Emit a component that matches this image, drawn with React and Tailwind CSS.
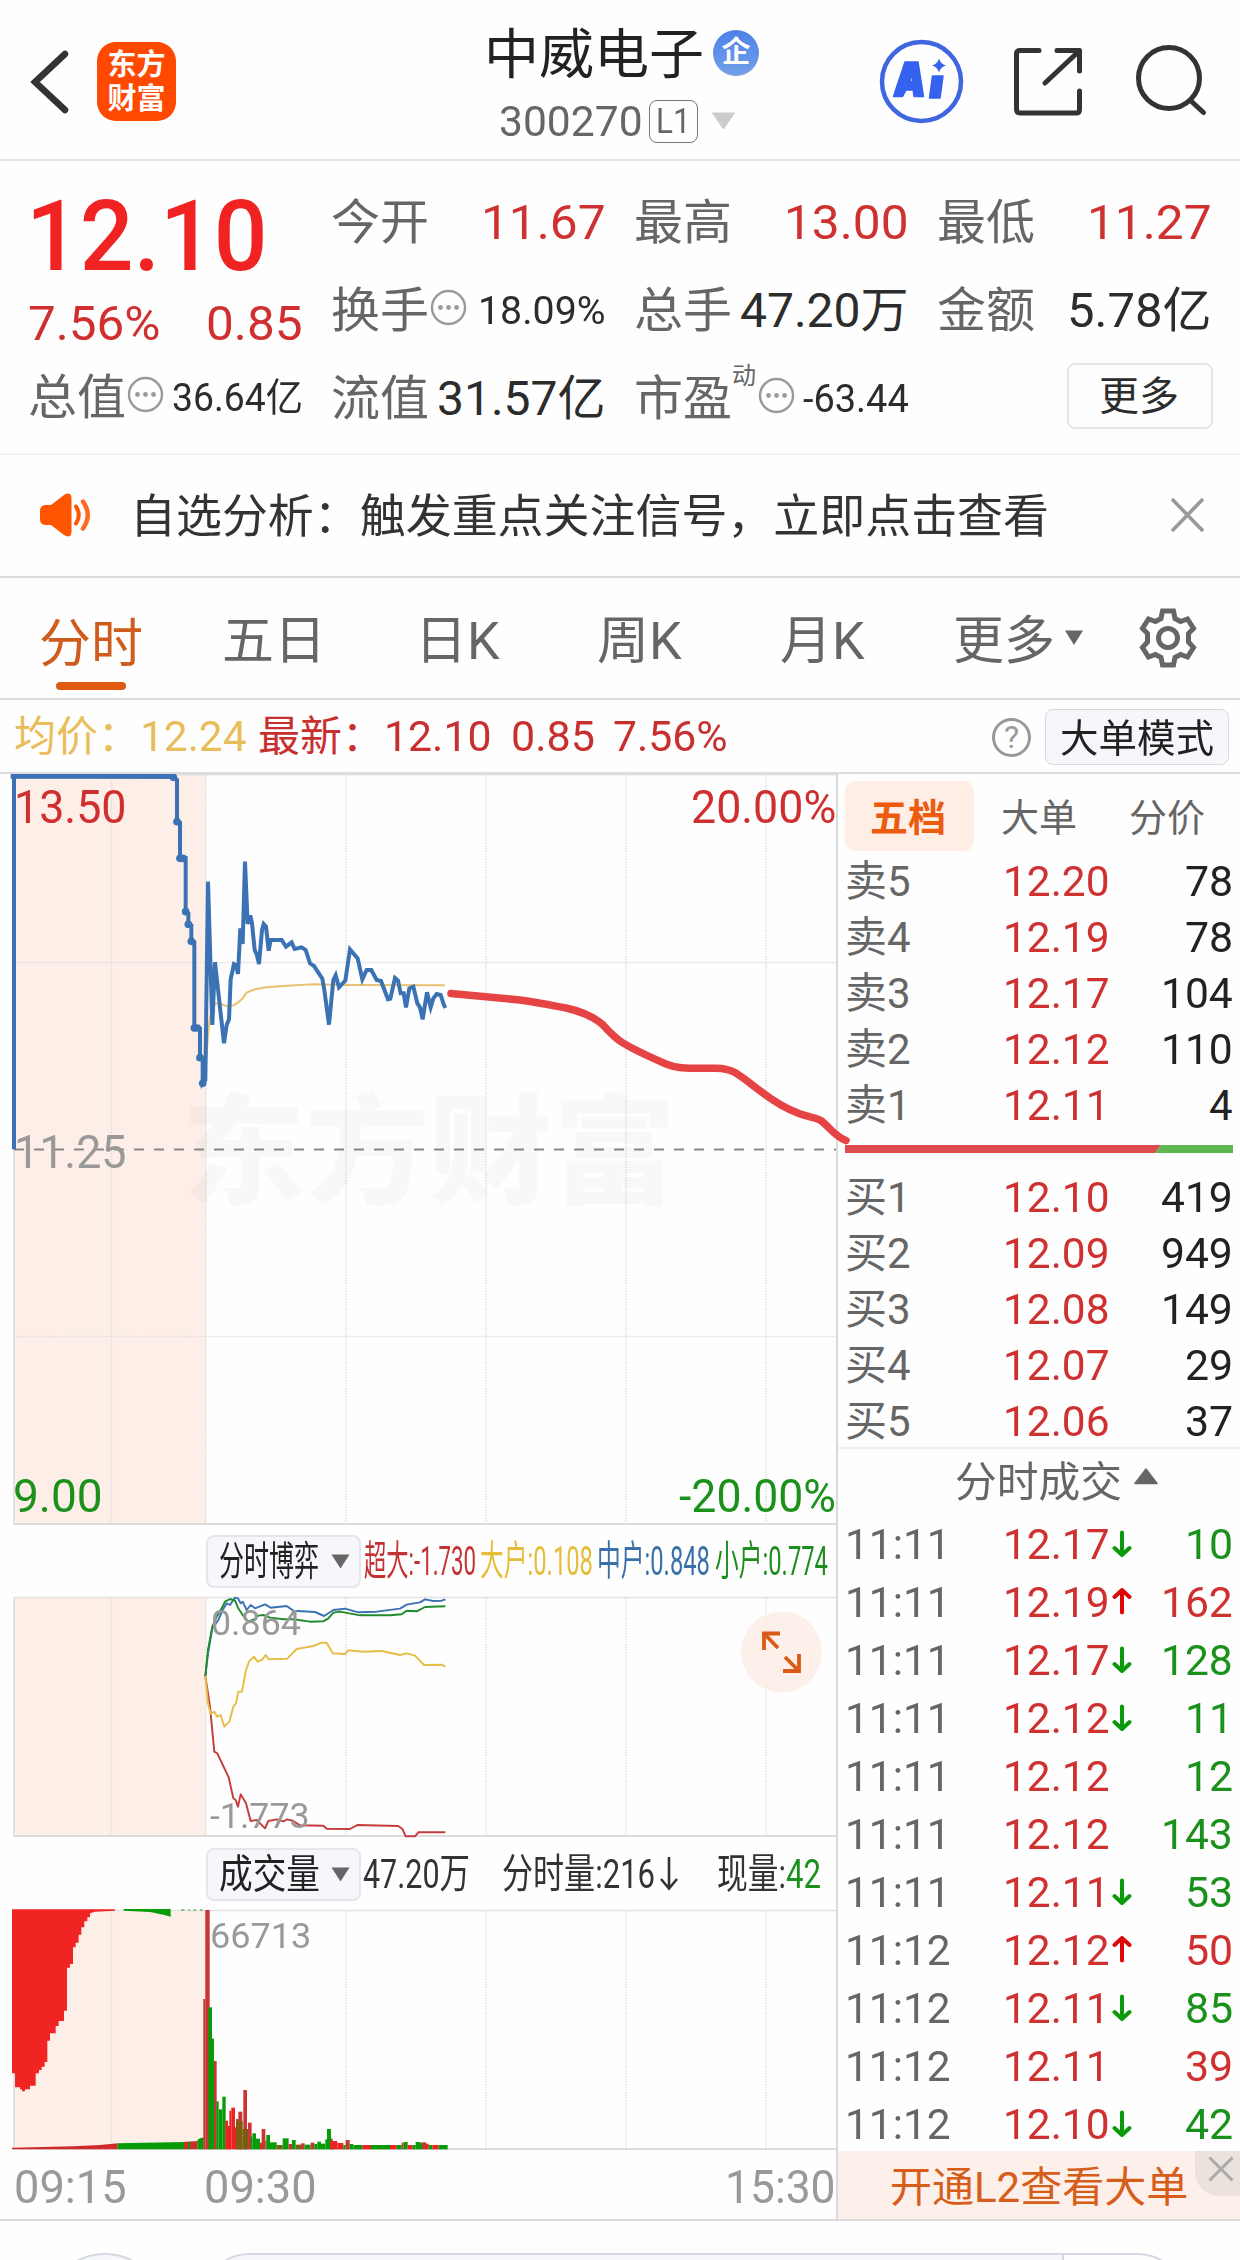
import React, { useLayoutEffect, useRef, useState } from "react";

/* Text squeezed or stretched horizontally to an exact width. */
function Fit({ w, className = "", children }) {
  const ref = useRef(null);
  const [s, setS] = useState(1);
  useLayoutEffect(() => {
    setS(w / ref.current.offsetWidth);
  }, [w]);
  return (
    <span className="block whitespace-nowrap" style={{ width: w }}>
      <span ref={ref} className={"inline-block origin-left whitespace-nowrap " + className} style={{ transform: `scaleX(${s})` }}>
        {children}
      </span>
    </span>
  );
}

const Dots = () => (
  <svg className="h-[37px] w-[37px] shrink-0" viewBox="0 0 37 37">
    <circle cx="18.5" cy="18.5" r="16.5" fill="none" stroke="#999" strokeWidth="2.4" />
    <circle cx="10.5" cy="18.5" r="2.4" fill="#999" />
    <circle cx="18.5" cy="18.5" r="2.4" fill="#999" />
    <circle cx="26.5" cy="18.5" r="2.4" fill="#999" />
  </svg>
);

function Stat({ label, icon, sup, value, red, w, small }) {
  return (
    <div className="flex h-[88px] w-[274px] items-center leading-none">
      <span className="-ml-[1px]"><Fit w={98} className="text-[48px] text-[#666]">{label}</Fit></span>
      {sup && <span className="-mr-[1px] mb-[46px] text-[24px] text-[#666]">{sup}</span>}
      {icon && <span className={sup ? "-mt-[7px] ml-[3px]" : "-mt-[7px] ml-[1px] mr-auto"}><Dots /></span>}
      <span className="ml-auto">
        <Fit w={w} className={(small ? "text-[39px] " : "text-[48px] ") + (red ? "text-[#cf3131]" : "text-[#2c2c2c]")}>{value}</Fit>
      </span>
    </div>
  );
}

function Header() {
  return (
    <header className="flex h-[161px] border-b-2 border-[#e2e6e6]">
      <div className="flex w-[484px] items-start">
        <svg className="ml-[27px] mt-[46px] h-[72px] w-[44px]" viewBox="0 0 44 72">
          <path d="M38 8 L8 36 L38 64" fill="none" stroke="#333" strokeWidth="6.5" strokeLinecap="round" strokeLinejoin="miter" />
        </svg>
        <div className="ml-[26px] mt-[42px] flex h-[79px] w-[79px] flex-col items-center justify-center rounded-[19px] bg-[#ff4800] text-[29px] font-bold leading-[34px] text-white">
          <span>东方</span>
          <span>财富</span>
        </div>
      </div>
      <div className="flex w-[388px] flex-col">
        <div className="mt-[22px] flex h-[62px] items-center">
          <Fit w={220} className="relative top-[3px] text-[54px] leading-none text-[#222]">中威电子</Fit>
          <span className="ml-[9px] flex h-[46px] w-[46px] items-center justify-center rounded-full bg-gradient-to-b from-[#4d80e8] to-[#74a0e8] text-[29px] font-bold leading-none text-white">企</span>
        </div>
        <div className="flex h-[76px] items-center pl-[15px]">
          <Fit w={144} className="relative top-[1px] text-[42px] leading-none text-[#666]">300270</Fit>
          <span className="ml-[6px] flex h-[43px] w-[49px] items-center justify-center rounded-[8px] border border-[#777] text-[35px] leading-none text-[#666]"><Fit w={35}>L1</Fit></span>
          <svg className="ml-[13px] h-[18px] w-[25px]" viewBox="0 0 25 18"><path d="M1.500 1 H23.500 L12.500 17 Z" fill="#ccc" stroke="#ccc" strokeLinejoin="round" /></svg>
        </div>
      </div>
      <div className="flex items-start">
        <svg className="ml-[6px] mt-[38px] h-[88px] w-[88px]" viewBox="0 0 88 88">
          <circle cx="43.500" cy="43.500" r="39.500" fill="none" stroke="#3f66e0" strokeWidth="4.500" />
          <path d="M27 24 H40 L45.500 58.500 H36 L35.200 52 H28 L24.500 58.500 H15.500 Z M32 43.500 H34.800 L34 35 Z" fill="#3563f0" fillRule="evenodd" stroke="#3563f0" strokeWidth="1.500" strokeLinejoin="round" />
          <path d="M54.500 38 H65 L62 60 H51.500 Z" fill="#3563f0" stroke="#3563f0" strokeWidth="1.500" strokeLinejoin="round" />
          <path d="M61 20.500 Q62.500 26 68 27.500 Q62.500 29 61 34.500 Q59.500 29 54 27.500 Q59.500 26 61 20.500Z" fill="#3563f0" />
        </svg>
        <svg className="ml-[44px] mt-[44px] h-[76px] w-[76px]" viewBox="0 0 76 76" fill="none" stroke="#333" strokeWidth="5" strokeLinecap="round" strokeLinejoin="round">
          <path d="M29 6.500 H10 Q6.500 6.500 6.500 10 V65 Q6.500 69 10 69 H67 Q69.500 69 69.500 65 V47" />
          <path d="M47 6.500 H69.500 V27 M67 9 L35 39" />
        </svg>
        <svg className="ml-[43px] mt-[41px] h-[80px] w-[80px]" viewBox="0 0 80 80" fill="none" stroke="#333" strokeWidth="5" strokeLinecap="round">
          <circle cx="40" cy="37" r="30.500" />
          <path d="M62 60 L74.500 71.500" />
        </svg>
      </div>
    </header>
  );
}

function Quote() {
  return (
    <section className="flex h-[294px] gap-[29px] border-b-2 border-[#f1f1f1] pl-[29px] pt-[18px]">
      <div className="w-[274px]">
        <div className="h-[116px] pt-[8px] leading-none text-[#f12222]">
          <span className="-ml-[3px] block"><Fit w={242} className="text-[99px] font-medium">12.10</Fit></span>
        </div>
        <div className="flex h-[57px] items-center justify-between leading-none text-[#d02f2f]">
          <span className="-ml-[1px]"><Fit w={132} className="text-[49px]">7.56%</Fit></span>
          <span><Fit w={97} className="text-[49px]">0.85</Fit></span>
        </div>
        <div className="pt-[2px]"><Stat label="总值" icon value="36.64亿" w={131} small /></div>
      </div>
      <div>
        <Stat label="今开" value="11.67" red w={125} />
        <Stat label="换手" icon value="18.09%" w={128} small />
        <Stat label="流值" value="31.57亿" w={169} />
      </div>
      <div>
        <Stat label="最高" value="13.00" red w={125} />
        <Stat label="总手" value="47.20万" w={169} />
        <Stat label="市盈" sup="动" icon value="-63.44" w={106} small />
      </div>
      <div>
        <Stat label="最低" value="11.27" red w={125} />
        <Stat label="金额" value="5.78亿" w={145} />
        <div className="flex h-[82px] items-center justify-end">
          <span className="-mr-[1px] flex h-[66px] w-[146px] items-center justify-center rounded-[8px] border-2 border-[#e6e6e6] text-[40px] leading-none text-[#2c2c2c]"><span className="-ml-[2px] mt-[2px]">更多</span></span>
        </div>
      </div>
    </section>
  );
}

function Notice() {
  return (
    <section className="flex h-[123px] items-center border-b-2 border-[#dcdcdc]">
      <svg className="-mt-[1px] ml-[38px] h-[46px] w-[56px]" viewBox="0 0 56 46">
        <path d="M8 13 H13 L26 3 Q33 -1 33.500 6 V40 Q33 47 26 43 L13 33 H8 Q2 33 2 27 V19 Q2 13 8 13Z" fill="#ff5500" />
        <path d="M38 14.500 Q43.500 23 38 31.500" fill="none" stroke="#ff5500" strokeWidth="4" strokeLinecap="round" />
        <path d="M45 9.500 Q54.500 23 45 36.500" fill="none" stroke="#ff6a20" strokeWidth="4.500" strokeLinecap="round" />
      </svg>
      <span className="ml-[36px]"><Fit w={919} className="text-[46px] leading-none text-[#333]">自选分析：触发重点关注信号，立即点击查看</Fit></span>
      <svg className="-mt-[1px] ml-[119px] h-[38px] w-[38px]" viewBox="0 0 38 38"><path d="M4 3 L35 35 M35 3 L4 35" stroke="#999" strokeWidth="3.600" /></svg>
    </section>
  );
}

function Tabs() {
  return (
    <nav className="flex h-[122px] items-center border-b-2 border-[#dcdcdc] text-[52px] leading-none text-[#666]">
      <div className="ml-[39px] mt-[30px] flex w-[104px] flex-col items-center text-[#cf5b1c]">
        <span className="mt-[3px]">分时</span>
        <span className="-ml-[1px] mt-[11px] h-[8px] w-[70px] rounded-full bg-[#e05a10]" />
      </div>
      <div className="ml-[79px] mt-[7px] w-[193px] whitespace-nowrap">五日</div>
      <div className="mt-[7px] w-[182px] whitespace-nowrap">日K</div>
      <div className="mt-[7px] w-[183px] whitespace-nowrap">周K</div>
      <div className="mt-[7px] w-[173px] whitespace-nowrap">月K</div>
      <div className="flex items-center"><span className="mt-[7px]"><Fit w={102}>更多</Fit></span>
        <svg className="ml-[9px] h-[16px] w-[20px]" viewBox="0 0 20 16"><path d="M1 0.500 H19 L10 15 Z" fill="#666" /></svg>
      </div>
      <svg className="ml-[53px] h-[62px] w-[62px]" viewBox="0 0 62 62" fill="none" stroke="#666" strokeWidth="5">
        <path d="M25.500 4 H36.500 L38 11.500 L43.500 14.500 L50.500 12 L56.500 21.500 L51.500 26.500 V35 L56.500 40.500 L50.500 50 L43.500 47.500 L38 50.500 L36.500 58 H25.500 L24 50.500 L18.500 47.500 L11.500 50 L5.500 40.500 L10.500 35 V26.500 L5.500 21.500 L11.500 12 L18.500 14.500 L24 11.500 Z" />
        <circle cx="31" cy="31" r="9.500" />
      </svg>
    </nav>
  );
}

function PriceLine() {
  return (
    <div className="flex h-[74px] items-center border-b-2 border-[#dcdcdc] pt-[2px] text-[42px] leading-none text-[#c83030]">
      <span className="ml-[14px] flex text-[#e9bd5a]"><span>均价：</span><Fit w={107}>12.24</Fit></span>
      <span className="ml-[11px] flex"><span>最新：</span><Fit w={108}>12.10</Fit></span>
      <span className="ml-[19px]"><Fit w={84}>0.85</Fit></span>
      <span className="ml-[18px]"><Fit w={115}>7.56%</Fit></span>
      <span className="ml-[264px] flex h-[39px] w-[39px] items-center justify-center rounded-full border-[3px] border-[#999] text-[32px] text-[#999]">?</span>
      <span className="ml-[14px] flex h-[56px] w-[184px] items-center justify-center rounded-[8px] border border-[#d6dae0] bg-[#f6f7fb] text-[#222]"><span className="mt-[2px]"><Fit w={154} className="text-[39px]">大单模式</Fit></span></span>
    </div>
  );
}

const V_GRID = [111.5, 206, 346, 486, 626, 766];

function Frame({ h, top = "#e3e3e3", bottom = "#dcdcdc", children }) {
  return (
    <>
      <rect x="14" y="0" width="192" height={h} fill="#fdeee7" />
      {V_GRID.map((x) => (
        <line key={x} x1={x} x2={x} y1="1" y2={h} stroke="#dedede" strokeWidth="1.500" strokeDasharray="1.500 1.200" />
      ))}
      <line x1="14" x2="14" y1="0" y2={h} stroke="#dcdcdc" strokeWidth="1.500" />
      <line x1="14" x2="836" y1="0.500" y2="0.500" stroke={top} strokeWidth="1.500" />
      <line x1="14" x2="836" y1={h - 1} y2={h - 1} stroke={bottom} strokeWidth="2" />
      {children}
    </>
  );
}

const PRICE =
  "42,1138 42,18 520,20 531,30 531,155 540,158 540,265 557,265 557,425 565,430 565,463 574,466 574,514 583,516 583,774 600,776 600,863 608,866 608,940 616,930 624,335 637,765 645,577 672,820 680,765 687,748 692,628 702,582 708,585 714,612 721,475 728,522 735,275 743,462 751,436 756,460 764,540 770,553 777,582 786,480 791,462 798,470 806,542 812,510 845,510 858,530 875,517 884,537 905,532 917,540 930,580 942,588 967,626 973,660 987,764 1000,630 1007,616 1017,652 1036,632 1050,538 1073,565 1087,628 1100,600 1114,600 1130,630 1143,633 1164,688 1171,686 1185,624 1194,632 1202,670 1211,670 1218,712 1228,655 1240,650 1252,700 1260,712 1268,748 1281,667 1292,712 1300,685 1310,672 1322,675 1330,700 1336,714";
const AVG = "616,900 624,800 630,740 645,700 665,703 685,710 700,706 715,697 728,685 740,668 765,658 800,652 860,647 940,643 1040,645 1335,646";
const KNOTS = [[520, 22], [531, 155], [540, 265], [549, 265], [557, 425], [565, 463], [574, 514], [583, 774], [592, 774], [600, 863], [608, 940]];

function PriceChart() {
  return (
    <div className="relative z-10 h-[751px] leading-none">
      <div className="absolute left-[182px] top-[320px]"><Fit w={494} className="text-[120px] font-black text-black/[0.025]">东方财富</Fit></div>
      <svg className="absolute left-0 top-0 h-[751px] w-[860px] mix-blend-multiply" viewBox="0 0 860 751">
        <Frame h={751} top="#dcdcdc">
          <line x1="14" x2="836" y1="188.500" y2="188.500" stroke="#dedede" strokeWidth="1.500" strokeDasharray="1.500 1.200" />
          <line x1="14" x2="836" y1="562.500" y2="562.500" stroke="#dedede" strokeWidth="1.500" strokeDasharray="1.500 1.200" />
          <line x1="14" x2="836" y1="375.500" y2="375.500" stroke="#888" strokeWidth="1.800" strokeDasharray="10 10" />
        </Frame>
      </svg>
      <span className="absolute left-[14px] top-[10px] text-[46px] text-[#d02f2f]"><Fit w={113}>13.50</Fit></span>
      <span className="absolute right-0 top-[10px] text-[46px] text-[#d02f2f]"><Fit w={145}>20.00%</Fit></span>
      <span className="absolute left-[14px] top-[355px] text-[46px] text-[#999]"><Fit w={113}>11.25</Fit></span>
      <span className="absolute left-[13px] top-[699px] text-[46px] text-[#1a911a]"><Fit w={90}>9.00</Fit></span>
      <span className="absolute right-0 top-[699px] text-[46px] text-[#1a911a]"><Fit w={157}>-20.00%</Fit></span>
      <svg className="absolute left-0 top-0 h-[751px] w-[860px]" viewBox="0 0 860 751" fill="none">
        <g transform="translate(0 -4) scale(0.33333)">
          <polyline points={AVG} stroke="#e8c272" strokeWidth="6" />
          <path d="M32 19 H520" stroke="#3b72b4" strokeWidth="14" />
          <polyline points={PRICE} stroke="#3b72b4" strokeWidth="12" />
          {KNOTS.map(([x, y]) => (
            <circle key={x} cx={x} cy={y} r="11.500" fill="#3b72b4" />
          ))}
        </g>
        <path transform="translate(0 -774)" d="M451 993.500 L520 1000 C535 1002 550 1005 566 1008 C580 1011 592 1016 602 1024 C608 1030 613 1036 620 1041 C630 1048 650 1057 666 1064 C676 1068 684 1068 696 1068.300 H716 C724 1068.500 729 1069.500 734 1072 C743 1077 752 1085 763 1093 C775 1102 787 1109 799 1113.500 C808 1117 814 1117 820 1120 C828 1125 834 1136 846 1140.500" stroke="#e64444" strokeWidth="7.500" strokeLinecap="round" />
      </svg>
    </div>
  );
}

const Tri = () => (
  <svg className="h-[15px] w-[19px] shrink-0" viewBox="0 0 19 15"><path d="M0.500 0.500 H18.500 L9.500 14.500 Z" fill="#666" /></svg>
);

function Picker({ w, children }) {
  return (
    <span className="ml-[206px] flex h-[53px] w-[155px] shrink-0 items-center justify-between rounded-[8px] border-2 border-[#e4e6ec] bg-[#f6f7fb] pl-[11px] pr-[9px] text-[40px] text-[#222]">
      <span className="mt-[1px]"><Fit w={w}>{children}</Fit></span>
      <Tri />
    </span>
  );
}

const FLOW = [
  ["#3b72b4", "616,648 624,580 637,505 655,480 668,450 680,430 690,435 705,413 714,415 722,430 728,425 740,450 752,435 765,445 795,433 812,443 860,438 880,452 945,456 972,468 1000,450 1035,446 1075,457 1130,455 1200,446 1220,434 1260,427 1275,418 1300,423 1325,422 1336,418"],
  ["#c43c3c", "616,648 630,740 643,875 652,880 686,952 700,1015 707,1020 714,1040 722,1003 738,1030 752,1083 770,1080 795,1105 805,1083 830,1078 850,1084 862,1078 880,1083 900,1096 970,1097 980,1106 1050,1107 1072,1095 1195,1098 1208,1108 1217,1129 1245,1129 1255,1117 1336,1117"],
  ["#e6bd48", "616,648 624,730 632,762 643,755 652,770 662,765 673,800 688,785 700,740 708,730 715,695 726,695 738,630 748,603 762,590 773,605 788,598 797,585 806,598 862,596 890,567 940,558 965,548 980,548 998,580 1035,582 1045,571 1090,575 1145,573 1200,585 1220,580 1245,587 1272,615 1325,614 1336,620"],
  ["#1e8c2a", "616,648 624,570 637,500 650,470 665,445 675,425 690,417 705,422 715,445 728,465 745,485 765,477 775,467 790,465 810,473 850,478 880,478 930,485 970,484 985,475 1000,458 1020,455 1080,466 1170,466 1205,463 1220,452 1250,454 1275,441 1336,439"],
];

function FlowChart() {
  return (
    <>
      <div className="flex h-[72px] items-center text-[41px] leading-none">
        <Picker w={100}>分时博弈</Picker>
        <span className="ml-[3px] text-[#c43333]"><Fit w={112}>超大:-1.730</Fit></span>
        <span className="ml-[4px] text-[#e6bd38]"><Fit w={113}>大户:0.108</Fit></span>
        <span className="ml-[4px] text-[#3a70a8]"><Fit w={113}>中户:0.848</Fit></span>
        <span className="ml-[5px] text-[#1e8c1e]"><Fit w={113}>小户:0.774</Fit></span>
      </div>
      <div className="relative h-[240px] leading-none">
        <svg className="absolute left-0 top-0 h-[240px] w-[837px] overflow-visible" viewBox="0 0 837 240" fill="none">
          <Frame h={240} />
          <g transform="translate(0 -137) scale(0.33333)">
            {FLOW.map(([c, p]) => (
              <polyline key={c} points={p} stroke={c} strokeWidth="5.800" strokeLinejoin="round" />
            ))}
          </g>
          <circle cx="781.500" cy="55" r="40.500" fill="#fdeee7" fillOpacity="0.92" />
          <path d="M780 36.500 H764 V53 M765 37.500 L778 51 M783 74 H799 V57 M798 73 L785 60" stroke="#da5b17" strokeWidth="3.800" />
        </svg>
        <span className="absolute left-[211px] top-[9px] text-[35px] text-[#999]"><Fit w={90}>0.864</Fit></span>
        <span className="absolute left-[210px] top-[202px] text-[35px] text-[#999]"><Fit w={100}>-1.773</Fit></span>
      </div>
    </>
  );
}

const R = "#ee2222";
const D = "#c93434";
const G = "#079b07";
const O = "#7a5f10";
const BARS = [
  [610, 616, 477, D], [616, 629, 210, D], [625, 636, 502, G], [636, 642, 596, G], [642, 650, 663, D], [649, 656, 784, G], [656, 667, 808, G],
  [667, 677, 770, G], [676, 684, 842, R], [684, 690, 858, R], [688, 694, 812, R], [694, 705, 803, R], [705, 709, 862, R], [708, 716, 837, O],
  [715, 727, 815, D], [715, 728, 843, O], [730, 741, 750, D], [728, 744, 867, O], [744, 755, 848, D], [752, 757, 890, G], [757, 768, 880, G], [768, 780, 896, G],
  [780, 786, 908, R], [785, 796, 867, D], [796, 800, 902, O], [799, 810, 885, G], [810, 830, 907, G], [830, 848, 915, O], [848, 866, 895, G], [866, 876, 912, D],
  [876, 887, 900, G], [887, 903, 914, O], [903, 914, 910, D], [914, 932, 914, G], [932, 943, 908, D], [943, 952, 912, G], [952, 963, 905, G],
  [963, 976, 911, G], [976, 981, 898, G], [981, 993, 867, G], [990, 1012, 903, R], [993, 998, 896, D], [1012, 1030, 909, R], [1030, 1037, 915, G], [1037, 1049, 900, D],
  [1049, 1060, 912, G], [1060, 1087, 915, G], [1087, 1113, 915, R], [1113, 1170, 915, G], [1170, 1190, 915, R], [1190, 1205, 915, G], [1205, 1211, 908, D],
  [1211, 1223, 906, G], [1223, 1238, 915, R], [1238, 1247, 915, G], [1247, 1260, 906, G], [1260, 1268, 908, G], [1266, 1278, 907, D], [1278, 1286, 911, R],
  [1286, 1297, 915, G], [1297, 1316, 915, R], [1316, 1343, 915, G],
];

function VolumeChart() {
  return (
    <>
      <div className="flex h-[73px] items-center pt-[1px] text-[41px] leading-none text-[#333]">
        <Picker w={101}>成交量</Picker>
        <span className="ml-[2px]"><Fit w={107}>47.20万</Fit></span>
        <span className="ml-[32px] flex">
          <Fit w={153}>分时量:216</Fit>
          <svg className="ml-[4px] h-[38px] w-[20px]" viewBox="0 0 20 38" fill="none" stroke="#333" strokeWidth="2.600"><path d="M10 3 V34 M2 25 L10 34.500 L18 25" /></svg>
        </span>
        <span className="ml-[38px] flex">
          <Fit w={69}>现量:</Fit>
          <span className="text-[#1a911a]"><Fit w={35}>42</Fit></span>
        </span>
      </div>
      <div className="relative h-[240px] leading-none">
        <svg className="absolute left-0 top-0 h-[240px] w-[837px] overflow-visible" viewBox="0 0 837 240">
          <Frame h={240} />
          <g transform="translate(0 -70) scale(0.33333)">
            <path d="M36 208V700H45V742H60V748H66V754H75V748H90V737H107V700H117V690H125V680H134V666H142V602H150V580H167V558H176V543H192V512H201V383H210V372H219V322H227V308H236V284H244V262H253V244H262V232H270V220L285 215L345 212V208Z" fill="#f12424" />
            <path d="M370 207 H512 V230 L490 224 L450 216 L372 212Z" fill="#079b07" />
            <path d="M543 208 h10 v4 h-10z M565 208 h5 v4 h-5z M580 208 h8 v4 h-8z M600 208 h8 v4 h-8z" fill="#079b07" fillOpacity="0.6" />
            <path d="M36 928 V923 L220 919 L300 915 L353 910 V928Z M552 928 V906 L592 903 V928Z" fill="#cf2b2b" />
            <path d="M353 928 V910 L552 906 V928Z M565 928 V905 h6 V928Z M592 928 V900 L600 895 L611 892 V928Z" fill="#079b07" />
            {BARS.map(([a, b, y, c], i) => (
              <rect key={i} x={a} y={y} width={b - a} height={928 - y} fill={c} />
            ))}
          </g>
        </svg>
        <span className="absolute left-[210px] top-[9px] text-[35px] text-[#999]"><Fit w={101}>66713</Fit></span>
      </div>
      <div className="flex h-[70px] items-center text-[46px] leading-none text-[#999]">
        <span className="ml-[14px] mt-[4px]"><Fit w={113}>09:15</Fit></span>
        <span className="ml-[77px] mt-[4px]"><Fit w={113}>09:30</Fit></span>
        <span className="ml-auto mr-0 mt-[4px]"><Fit w={111}>15:30</Fit></span>
      </div>
    </>
  );
}

const SELL = [["卖5", "12.20", "78"], ["卖4", "12.19", "78"], ["卖3", "12.17", "104"], ["卖2", "12.12", "110"], ["卖1", "12.11", "4"]];
const BUY = [["买1", "12.10", "419"], ["买2", "12.09", "949"], ["买3", "12.08", "149"], ["买4", "12.07", "29"], ["买5", "12.06", "37"]];
const TICKS = [
  ["11:11", "12.17", "d", "10", "g"], ["11:11", "12.19", "u", "162", "r"], ["11:11", "12.17", "d", "128", "g"], ["11:11", "12.12", "d", "11", "g"],
  ["11:11", "12.12", "", "12", "g"], ["11:11", "12.12", "", "143", "g"], ["11:11", "12.11", "d", "53", "g"], ["11:12", "12.12", "u", "50", "r"],
  ["11:12", "12.11", "d", "85", "g"], ["11:12", "12.11", "", "39", "r"], ["11:12", "12.10", "d", "42", "g"],
];

function BookRow({ row }) {
  return (
    <div className="flex h-[56.1px] items-center pl-[7px] pr-[7px]">
      <span className="w-[158px] text-[#666]">{row[0]}</span>
      <Fit w={107} className="text-[#cf3131]">{row[1]}</Fit>
      <span className="ml-auto"><Fit w={row[2].length * 24} className="text-[#222]">{row[2]}</Fit></span>
    </div>
  );
}

function Book() {
  return (
    <aside className="flex w-[402px] flex-col text-[42px] leading-none">
      <div className="ml-[7px] mt-[7px] flex h-[70px] shrink-0 items-center text-[38px] text-[#666]">
        <span className="flex h-[70px] w-[129px] items-center justify-center rounded-[10px] bg-[#feeee6] font-bold text-[#ec5b0e]"><span className="-ml-[3px] mt-[3px]">五档</span></span>
        <span className="ml-[27px] mt-[4px]">大单</span>
        <span className="ml-[52px] mt-[4px]">分价</span>
      </div>
      <div className="mt-[3px] shrink-0">{SELL.map((r) => <BookRow key={r[0]} row={r} />)}</div>
      <svg className="ml-[7px] mt-[11px] h-[8px] w-[388px] shrink-0" viewBox="0 0 388 8">
        <path d="M0 0 H316 L310 8 H0Z" fill="#df4c4f" />
        <path d="M316 0 H388 V8 H310Z" fill="#5eb750" />
      </svg>
      <div className="-mb-[3px] mt-[16px] shrink-0">{BUY.map((r) => <BookRow key={r[0]} row={r} />)}</div>
      <div className="flex h-[69px] shrink-0 items-center border-t-2 border-[#efefef] pl-[117px] text-[#666]">
        <span className="mt-[1px]"><Fit w={167}>分时成交</Fit></span>
        <svg className="-mt-[12px] ml-[12px] h-[17px] w-[24px]" viewBox="0 0 24 17"><path d="M12 1 L23 15.500 H1 Z" fill="#666" stroke="#666" strokeLinejoin="round" strokeWidth="1.500" /></svg>
      </div>
      <div className="h-[635px] shrink-0">
        {TICKS.map((t, i) => (
          <div key={i} className="flex h-[58px] items-center pl-[7px] pr-[7px]">
            <span className="w-[158px] text-[#666]"><Fit w={106}>{t[0]}</Fit></span>
            <Fit w={107} className="text-[#cf3131]">{t[1]}</Fit>
            {t[2] && (
              <svg className={t[2] === "u" ? "ml-[2px] h-[28px] w-[20px] rotate-180 -mt-[4px]" : "ml-[2px] h-[28px] w-[20px] -mt-[2px]"} viewBox="0 0 20 28" fill="none" stroke={t[2] === "u" ? "#dd0707" : "#0b980b"} strokeWidth="4" strokeLinecap="round" strokeLinejoin="round">
                <path d="M10 2.500 V25 M2.500 18 L10 25 L17.500 18" />
              </svg>
            )}
            <span className="ml-auto"><Fit w={t[3].length * 24} className={t[4] === "r" ? "text-[#cf3131]" : "text-[#1a911a]"}>{t[3]}</Fit></span>
          </div>
        ))}
      </div>
      <div className="relative flex h-[68px] shrink-0 items-center bg-[#fdf0ea] pl-[52px] text-[#d65d1a]">
        <span className="mt-[6px]">开通L2查看大单</span>
        <span className="absolute right-0 top-0 flex h-[45px] w-[45px] items-center justify-center rounded-bl-[24px] bg-[#ece2dd]">
          <svg className="ml-[6px] -mt-[8px] h-[26px] w-[26px]" viewBox="0 0 26 26"><path d="M1.500 1.500 L24.500 24.500 M24.500 1.500 L1.500 24.500" stroke="#aaa" strokeWidth="3" /></svg>
        </span>
      </div>
    </aside>
  );
}

export default function App() {
  return (
    <div className="h-[2260px] w-[1240px] overflow-hidden bg-[#fefefe] font-['Roboto','Noto_Sans_CJK_SC',sans-serif]">
      <Header />
      <Quote />
      <Notice />
      <Tabs />
      <PriceLine />
      <main className="flex h-[1447px] border-b-2 border-[#d9dadb]">
        <div className="w-[838px] border-r-2 border-[#d9dadb]">
          <PriceChart />
          <FlowChart />
          <VolumeChart />
        </div>
        <Book />
      </main>
      <footer className="flex h-[39px] overflow-hidden pt-[32px]">
        <div className="ml-[45px] h-[120px] w-[120px] shrink-0 rounded-full border-2 border-[#d5d8e0] bg-[#f6f7fb]" />
        <div className="ml-[35px] flex h-[100px] w-[987px] shrink-0 overflow-hidden rounded-full border-2 border-[#d5d8e0]">
          <div className="w-[862px] border-r-2 border-[#d5d8e0] bg-[#f6f7fb]" />
        </div>
      </footer>
    </div>
  );
}
